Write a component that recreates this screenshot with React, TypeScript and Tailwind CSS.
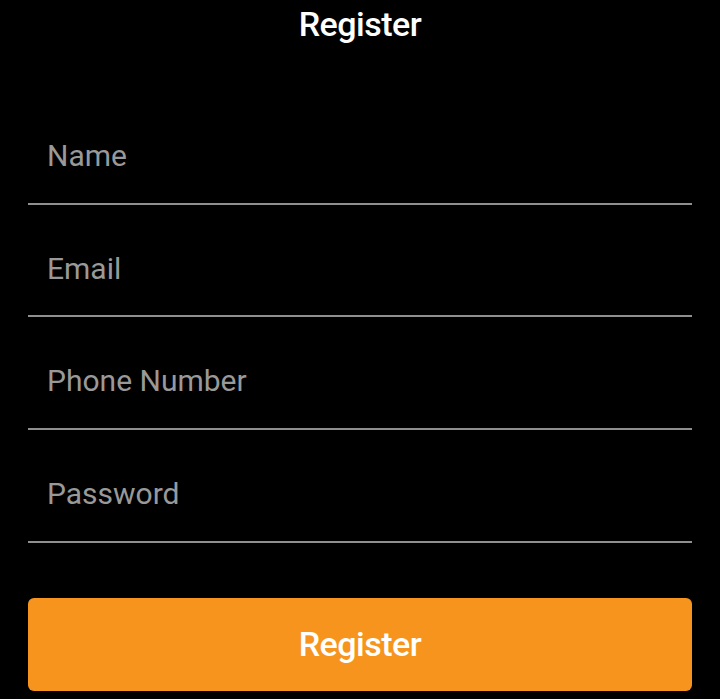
import { useState } from "react";

const fields = ["Name", "Email", "Phone Number", "Password"];

function App() {
  const [values, setValues] = useState<Record<string, string>>({});

  return (
    <div className="bg-black w-[720px] h-[699px] font-['Roboto',sans-serif]">
      <h1 className="text-center text-white text-[34px] font-medium leading-[48px] tracking-[-0.5px]">Register</h1>
      <form onSubmit={(e) => e.preventDefault()} className="px-[28px] mt-[44px] flex flex-col">
        {fields.map((f) => (
          <input
            key={f}
            type={f === "Password" ? "password" : "text"}
            placeholder={f}
            value={values[f] ?? ""}
            onChange={(e) => setValues({ ...values, [f]: e.target.value })}
            className="block w-full h-[112.7px] pt-[16px] pl-[19px] bg-transparent border-b-2 border-[#8f8f8f] text-[30px] text-white placeholder:text-[#999999] outline-none"
          />
        ))}
        <button
          type="submit"
          className="mt-[55px] h-[93px] w-full rounded-[6px] bg-[#F7941D] text-white text-[34px] font-medium tracking-[-0.5px]"
        >
          Register
        </button>
      </form>
    </div>
  );
}

export default App;
